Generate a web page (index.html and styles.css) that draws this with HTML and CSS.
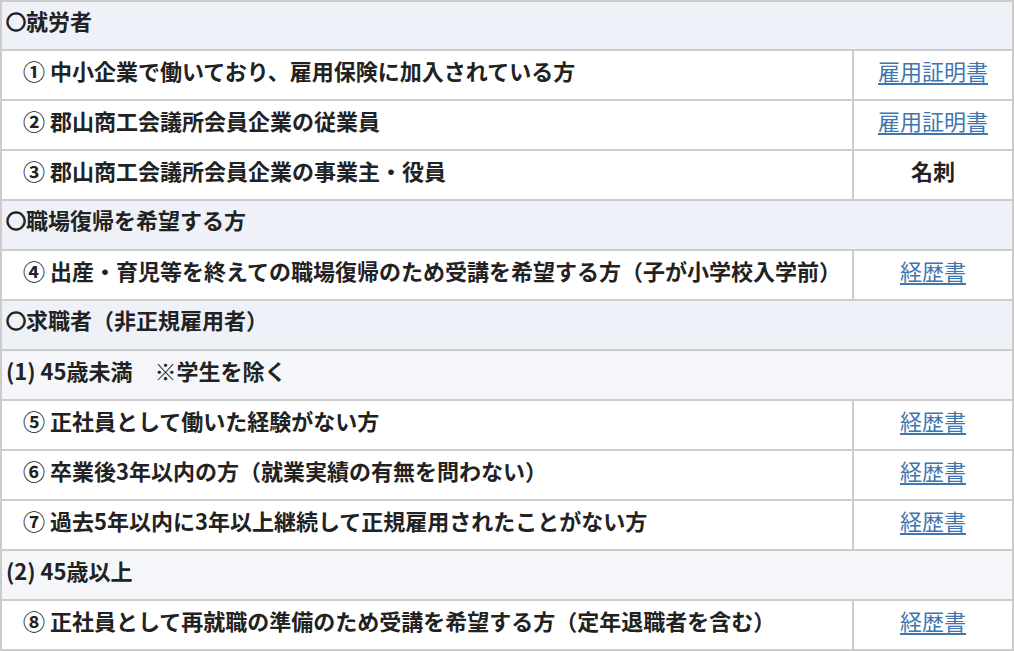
FILE: index.html
```html
<!DOCTYPE html>
<html lang="ja">
<head>
<meta charset="utf-8">
<link rel="stylesheet" href="styles.css">
</head>
<body>
<table class="req">
  <colgroup>
    <col class="c-lbl">
    <col class="c-doc">
  </colgroup>
  <tbody>
    <tr class="sec first"><td colspan="2"><span class="mk">○</span>就労者</td></tr>
    <tr class="item"><td class="lbl">① 中小企業で働いており、雇用保険に加入されている方</td><td class="doc"><a href="#">雇用証明書</a></td></tr>
    <tr class="item"><td class="lbl">② 郡山商工会議所会員企業の従業員</td><td class="doc"><a href="#">雇用証明書</a></td></tr>
    <tr class="item"><td class="lbl">③ 郡山商工会議所会員企業の事業主・役員</td><td class="doc"><b>名刺</b></td></tr>
    <tr class="sec"><td colspan="2"><span class="mk">○</span>職場復帰を希望する方</td></tr>
    <tr class="item"><td class="lbl">④ 出産・育児等を終えての職場復帰のため受講を希望する方（子が小学校入学前）</td><td class="doc"><a href="#">経歴書</a></td></tr>
    <tr class="sec"><td colspan="2"><span class="mk">○</span>求職者（非正規雇用者）</td></tr>
    <tr class="sub"><td colspan="2">(1) 45歳未満　※学生を除く</td></tr>
    <tr class="item"><td class="lbl">⑤ 正社員として働いた経験がない方</td><td class="doc"><a href="#">経歴書</a></td></tr>
    <tr class="item"><td class="lbl">⑥ 卒業後3年以内の方（就業実績の有無を問わない）</td><td class="doc"><a href="#">経歴書</a></td></tr>
    <tr class="item"><td class="lbl">⑦ 過去5年以内に3年以上継続して正規雇用されたことがない方</td><td class="doc"><a href="#">経歴書</a></td></tr>
    <tr class="sub"><td colspan="2">(2) 45歳以上</td></tr>
    <tr class="item"><td class="lbl">⑧ 正社員として再就職の準備のため受講を希望する方（定年退職者を含む）</td><td class="doc"><a href="#">経歴書</a></td></tr>
  </tbody>
</table>
</body>
</html>
```

FILE: styles.css
```css
html, body {
  margin: 0;
  padding: 0;
  background: #ffffff;
}
body {
  font-family: "Noto Sans CJK JP", "Noto Sans", sans-serif;
  color: #222222;
}
.req {
  border-collapse: collapse;
  width: 1012px;
  table-layout: fixed;
}
.req col.c-lbl {
  width: 852px;
}
.req col.c-doc {
  width: 160px;
}
.req td {
  border: 2px solid #cccccc;
  height: 50px;
  padding: 0 4px 10px;
  font-size: 22px;
  line-height: 30px;
  font-weight: 700;
  box-sizing: border-box;
  white-space: nowrap;
}
.req tr.first td {
  height: 49px;
}
.req tr.sec td {
  background: #eef1f7;
}
.req tr.sub td {
  background: #f4f6f9;
}
.req td.lbl {
  padding-left: 21px;
}
.req td.doc {
  text-align: center;
}
.req .mk {
  display: inline-block;
  width: 20px;
  font-size: 20px;
  -webkit-text-stroke: 1.4px #222222;
}
.req td.doc a {
  color: #4076af;
  font-weight: 400;
  text-decoration: underline;
  text-underline-offset: 3px;
}
.req td.doc b {
  font-weight: 700;
  color: #222222;
}
```
